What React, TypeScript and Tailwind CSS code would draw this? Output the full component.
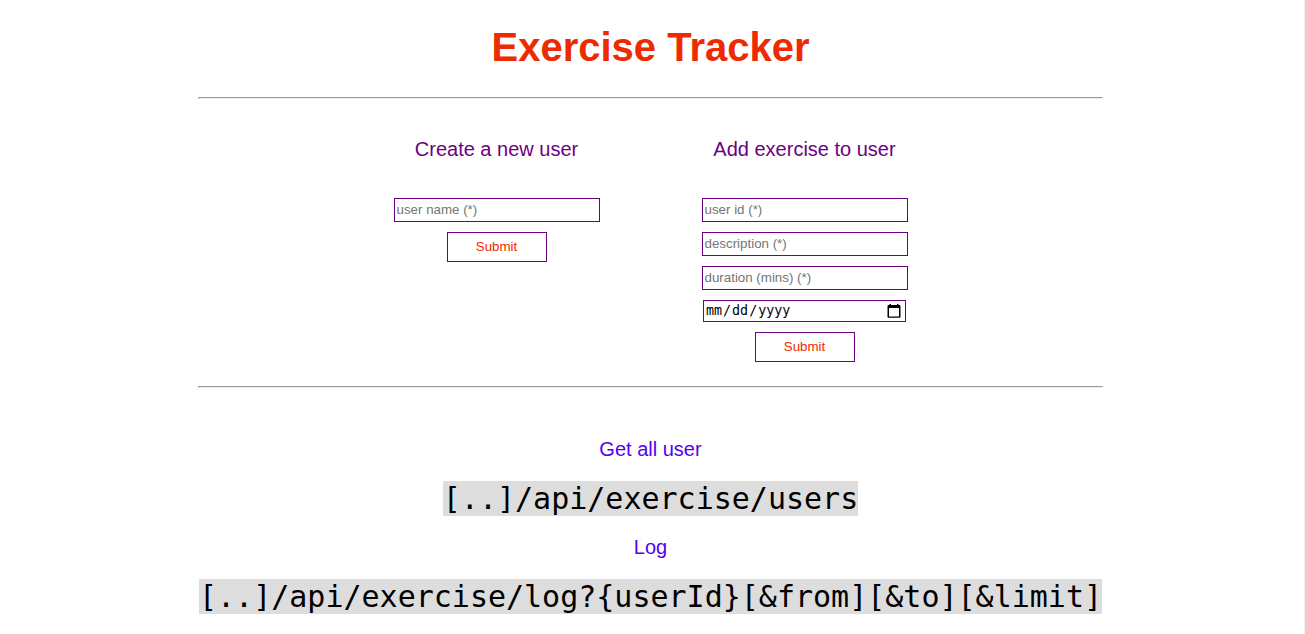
import React from "react";

function Field({ placeholder }: { placeholder: string }) {
  return (
    <input
      type="text"
      placeholder={placeholder}
      className="h-6 w-[206px] rounded-none border border-[#6d0080] bg-white pt-0 pr-0.5 pb-px pl-0.5 text-[13.333px] leading-[15px] placeholder:text-[#757575] placeholder:opacity-100"
    />
  );
}

function DateField() {
  return (
    <div className="flex h-[22px] w-[203px] items-center border border-[#6d0080] bg-white pr-1 pl-px">
      <input
        type="date"
        className="h-5 min-w-0 flex-1 bg-transparent font-['DejaVu_Sans_Mono',monospace] text-[13.333px] [&::-webkit-calendar-picker-indicator]:hidden"
      />
      <svg viewBox="0 0 14 15" className="mb-px h-[15px] w-3.5 shrink-0" fill="#000000">
        <path
          d="M2.500 1H4v1h6V1h1.500v1h.8A1.200 1.200 0 0 1 13.500 3.200v10.300A1.200 1.200 0 0 1 12.300 14.700H1.700A1.200 1.200 0 0 1 .5 13.500V3.200A1.200 1.200 0 0 1 1.700 2H2.500zM2 5v8.400h10V5z"
          fillRule="evenodd"
        />
      </svg>
    </div>
  );
}

function Submit() {
  return (
    <button className="h-[30px] w-[100px] border border-[#6d0080] bg-white pb-0.5 text-[13.333px] leading-[15px] text-[#ef2b00]">
      Submit
    </button>
  );
}

function Rule() {
  return <hr className="h-0.5 w-[905px] border border-[#9a9a9a] border-r-[#eeeeee] border-b-[#eeeeee]" />;
}

export default function App() {
  return (
    <div className="h-[634px] overflow-hidden border-r border-[#eeeeee] bg-white font-['Liberation_Sans',sans-serif]">
      <main className="ml-[198px] flex w-[905px] flex-col items-center">
        <h1 className="mt-6 h-[46px] text-[40px] leading-[46px] font-bold text-[#ee2b00]">Exercise Tracker</h1>
        <div className="mt-[27px]">
          <Rule />
        </div>
        <div className="mt-[39px] flex h-[248px] gap-[102px]">
          <form className="flex w-[206px] flex-col items-center" onSubmit={(e) => e.preventDefault()}>
            <h2 className="mb-[37px] text-xl leading-[23px] text-[#6d0080]">Create a new user</h2>
            <div className="flex flex-col items-center gap-2.5">
              <Field placeholder="user name (*)" />
              <Submit />
            </div>
          </form>
          <form className="flex w-[206px] flex-col items-center" onSubmit={(e) => e.preventDefault()}>
            <h2 className="mb-[37px] text-xl leading-[23px] text-[#6d0080]">Add exercise to user</h2>
            <div className="flex flex-col items-center gap-2.5">
              <Field placeholder="user id (*)" />
              <Field placeholder="description (*)" />
              <Field placeholder="duration (mins) (*)" />
              <DateField />
              <Submit />
            </div>
          </form>
        </div>
        <Rule />
        <h2 className="mt-[50px] text-xl leading-[23px] text-[#5500f0]">Get all user</h2>
        <code className="mt-5 h-[35px] bg-[#dddddd] font-['DejaVu_Sans_Mono',monospace] text-[30px] leading-[35px] text-black">
          [..]/api/exercise/users
        </code>
        <h2 className="mt-5 text-xl leading-[23px] text-[#5500f0]">Log</h2>
        <code className="mt-5 h-[35px] bg-[#dddddd] font-['DejaVu_Sans_Mono',monospace] text-[30px] leading-[35px] whitespace-nowrap text-black">
          {"[..]/api/exercise/log?{userId}[&from][&to][&limit]"}
        </code>
      </main>
    </div>
  );
}
